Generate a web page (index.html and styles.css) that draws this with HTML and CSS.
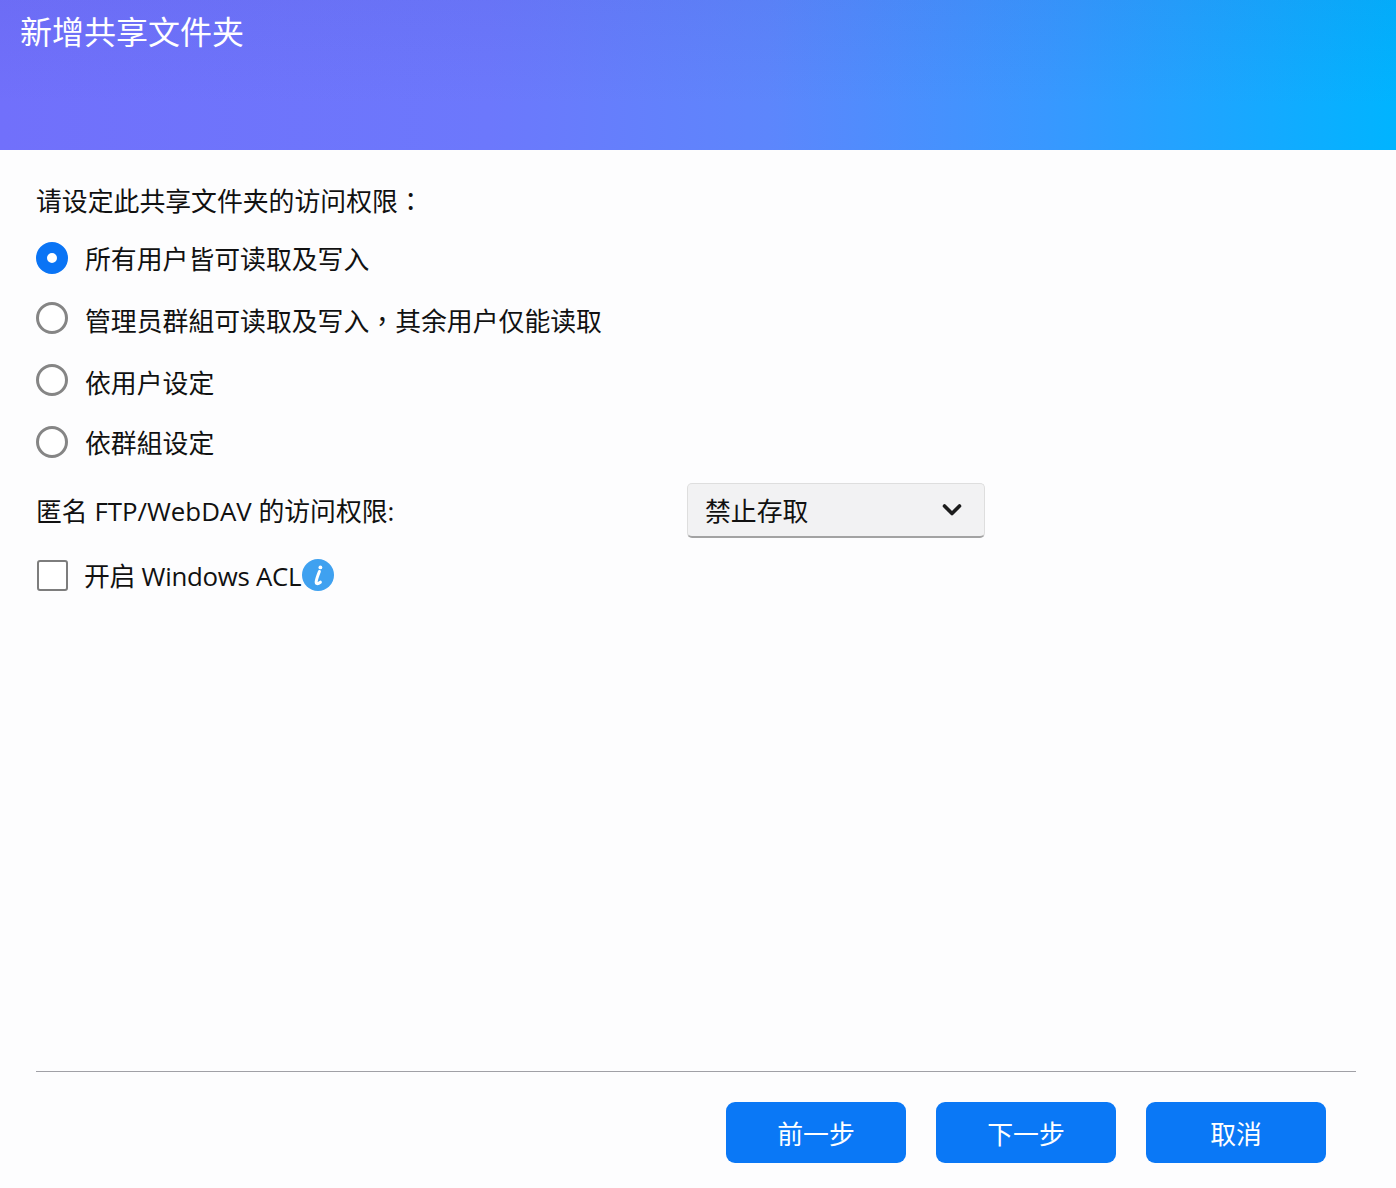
FILE: index.html
```html
<!DOCTYPE html>
<html lang="zh-CN">
<head>
<meta charset="utf-8">
<title>新增共享文件夹</title>
<link rel="stylesheet" href="styles.css">
</head>
<body>
<div class="dialog">
  <header class="header"><h1 class="title">新增共享文件夹</h1></header>
  <main class="content">
    <p class="intro">请设定此共享文件夹的访问权限<span class="punct" lang="zh-TW">：</span></p>
    <div class="options">
      <label class="option opt-a"><span class="radio radio-on"></span><span>所有用户皆可读取及写入</span></label>
      <label class="option opt-b"><span class="radio radio-up"></span><span>管理员群組可读取及写入<span class="punct" lang="zh-TW">，</span>其余用户仅能读取</span></label>
      <label class="option opt-c"><span class="radio radio-up"></span><span>依用户设定</span></label>
      <label class="option opt-d"><span class="radio"></span><span>依群組设定</span></label>
    </div>
    <div class="ftp-row">
      <span class="ftp-label">匿名 FTP/WebDAV 的访问权限:</span>
      <div class="select">
        <span>禁止存取</span>
        <svg class="chevron" width="20" height="14" viewBox="0 0 20 14"><path d="M2.5 3 L10 10.5 L17.5 3" fill="none" stroke="#1c1c1c" stroke-width="3.6" stroke-linecap="round" stroke-linejoin="round"/></svg>
      </div>
    </div>
    <label class="acl-row">
      <span class="checkbox"></span>
      <span class="acl-text">开启 Windows ACL</span>
      <svg class="info" width="32" height="32" viewBox="0 0 32 32"><circle cx="16" cy="16" r="16" fill="#3fa1f0"/><circle cx="18.4" cy="8.4" r="1.9" fill="#fff"/><path d="M17.4 12.5 C16 16 14.6 20 14.2 22.5 C14 25 15.6 25.4 18.4 23.2" fill="none" stroke="#fff" stroke-width="3" stroke-linecap="round"/></svg>
    </label>
  </main>
  <footer class="footer">
    <div class="actions">
      <button class="btn">前一步</button>
      <button class="btn">下一步</button>
      <button class="btn">取消</button>
    </div>
  </footer>
</div>
</body>
</html>
```
FILE: styles.css
```css
* { box-sizing: border-box; }
html, body { margin: 0; padding: 0; }
body {
  background: #fdfdfe;
  color: #111;
  font-family: "Open Sans", "Noto Sans CJK SC", "Noto Sans", sans-serif;
  font-size: 25.85px;
}
.punct {
  font-family: "Noto Sans CJK TC", sans-serif;
  line-height: 1;
}
.dialog {
  width: 1396px;
  height: 1188px;
  display: flex;
  flex-direction: column;
  overflow: hidden;
}
.header {
  height: 150px;
  flex: none;
  padding: 8px 20px 0;
  background:
    linear-gradient(180deg, rgba(50, 60, 170, 0.07), rgba(50, 60, 170, 0) 70%),
    linear-gradient(90deg, #7170fb 0%, #6c78fc 35%, #5d86fc 55%, #3898ff 75%, #00b4ff 100%);
}
.title {
  margin: 0;
  font-size: 32px;
  font-weight: 400;
  line-height: 48px;
  color: #fff;
}
.content {
  flex: 1;
  padding: 33px 0 0 36px;
}
.intro {
  margin: 0;
  height: 36px;
  line-height: 36px;
  white-space: nowrap;
}
.options {
  display: flex;
  flex-direction: column;
}
.option {
  display: flex;
  align-items: center;
  gap: 17px;
  height: 36px;
  white-space: nowrap;
}
.opt-a { margin-top: 21px; }
.opt-b { margin-top: 26px; }
.opt-c { margin-top: 26px; }
.opt-d { margin-top: 24px; }
.radio {
  width: 32px;
  height: 32px;
  flex: none;
  border-radius: 50%;
  border: 3.5px solid #858585;
  background: #fff;
}
.radio-up { margin-bottom: 5px; }
.radio-on {
  border: 11px solid #0a74f5;
  margin-bottom: 1px;
}
.ftp-row {
  margin-top: 22px;
  display: flex;
  align-items: center;
  height: 56px;
}
.ftp-label {
  width: 651px;
  flex: none;
  white-space: nowrap;
}
.select {
  width: 298px;
  height: 55px;
  display: flex;
  align-items: center;
  justify-content: space-between;
  padding: 0 22px 0 17px;
  border: 1px solid #dedede;
  border-bottom: 2px solid #a3a3a3;
  border-radius: 5px;
  background: #f2f2f3;
}
.acl-row {
  margin-top: 19px;
  display: flex;
  align-items: center;
  height: 36px;
  white-space: nowrap;
}
.acl-text { letter-spacing: -0.28px; }
.checkbox {
  width: 31px;
  height: 31px;
  flex: none;
  margin: 0 16px 0 1px;
  border: 2.5px solid #7d7d7d;
  border-radius: 3px;
  background: #fff;
}
.info { flex: none; margin-left: 1px; }
.footer {
  height: 117px;
  flex: none;
  margin: 0 40px 0 36px;
  border-top: 1px solid #a0a0a6;
  padding: 30px 30px 0 0;
}
.actions {
  display: flex;
  justify-content: flex-end;
  gap: 30px;
}
.btn {
  width: 180px;
  height: 61px;
  border: 0;
  border-radius: 9px;
  background: #0a78f6;
  color: #fff;
  font: inherit;
  padding: 0;
}
```
